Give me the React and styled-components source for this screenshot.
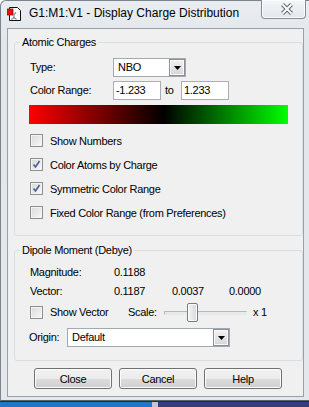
import React from 'react';
import styled, { createGlobalStyle } from 'styled-components';

const GlobalStyle = createGlobalStyle`
  html, body {
    margin: 0;
    padding: 0;
  }
  body {
    width: 309px;
    height: 407px;
    overflow: hidden;
    font-family: "Liberation Sans", Arial, sans-serif;
    font-size: 11px;
    letter-spacing: -0.3px;
    color: #000;
  }
`;

// --- Desktop + window frame ---
const Screen = styled.div`
  width: 309px;
  height: 407px;
  display: flex;
  flex-direction: column;
`;

const Window = styled.div`
  box-sizing: border-box;
  height: 401px;
  display: flex;
  flex-direction: column;
  padding: 0 0 3px 6px;
  border-left: 1px solid #7b838c;
  border-top: 1px solid #7b838c;
  border-bottom: 1px solid #59616b;
  border-top-left-radius: 6px;
  background: linear-gradient(#e9edf1, #e2e7ec 40px, #e4e8ec);
`;

const Taskbar = styled.div`
  flex: 1;
  display: flex;
  border-top: 1px solid #1c2b55;
`;

const TaskSegment = styled.div`
  width: ${(p) => p.$w}px;
  flex: ${(p) => (p.$w ? 'none' : 1)};
  background: ${(p) => p.$bg};
`;

const TitleBar = styled.div`
  height: 27px;
  display: flex;
  align-items: flex-start;
`;

const AppIcon = styled.svg`
  margin-top: 5px;
  flex: none;
`;

const TitleText = styled.span`
  margin: 5px 0 0 6px;
  font-size: 12px;
  line-height: 15px;
  letter-spacing: 0;
  white-space: nowrap;
`;

const CloseButton = styled.div`
  box-sizing: border-box;
  margin: -1px 3px 0 auto;
  width: 45px;
  height: 19px;
  display: flex;
  align-items: center;
  justify-content: center;
  padding-left: 6px;
  border: 1px solid #858d97;
  border-top: none;
  border-radius: 0 0 4px 4px;
  background: linear-gradient(#f4f6f8, #e3e7eb);
  box-shadow: inset 0 0 0 1px #fbfcfd;
`;

const Client = styled.div`
  margin-right: 5px;
  padding-bottom: 7px;
  border: 1px solid #98a0a8;
  background: #f0f0f0;
  display: flex;
  flex-direction: column;
`;

// --- Group boxes ---
const Group = styled.fieldset`
  margin: ${(p) => p.$top}px 0 0 6px;
  padding: ${(p) => p.$pt}px 0 ${(p) => p.$pb}px 5px;
  border: 1px solid #d5dfe5;
  border-radius: 3px;
  min-width: 0;
`;

const Legend = styled.legend`
  padding: 0 2px;
  line-height: 14px;
`;

const GroupBody = styled.div`
  padding-left: 10px;
  display: flex;
  flex-direction: column;
`;

const FormRow = styled.div`
  height: 19px;
  display: flex;
  align-items: center;
  margin-top: ${(p) => p.$mt || 0}px;
`;

const Label = styled.span`
  width: ${(p) => p.$w}px;
  flex: none;
  line-height: 13px;
  white-space: nowrap;
  margin-left: ${(p) => p.$ml || 0}px;
`;

const Combo = styled.div`
  box-sizing: border-box;
  width: ${(p) => p.$w}px;
  height: 19px;
  display: flex;
  border: 1px solid #a3a9b1;
  background: #fff;
`;

const ComboText = styled.span`
  flex: 1;
  padding-left: 4px;
  line-height: 16px;
`;

const DropButton = styled.div`
  box-sizing: border-box;
  width: 16px;
  height: 17px;
  display: flex;
  align-items: center;
  justify-content: center;
  border: 1px solid #8a8f96;
  background: linear-gradient(#f2f2f2, #e4e4e4 50%, #d6d6d6);
  box-shadow: inset 0 0 0 1px #fafafa;
`;

const TextBox = styled.div`
  box-sizing: border-box;
  width: 48px;
  height: 19px;
  padding-left: 2px;
  border: 1px solid #abadb3;
  background: #fff;
  line-height: 17px;
`;

const ToText = styled.span`
  width: 16px;
  margin-left: 4px;
  line-height: 13px;
`;

const GradientBar = styled.div`
  margin: 5px 0 0 -1px;
  width: 259px;
  height: 19px;
  background: linear-gradient(to right, #ff0000, #000 52%, #00ff00);
`;

const CheckList = styled.div`
  margin-top: 10px;
  display: flex;
  flex-direction: column;
  gap: 11px;
`;

const CheckRow = styled.div`
  height: 13px;
  display: flex;
  align-items: center;
`;

const Box = styled.span`
  box-sizing: border-box;
  width: 13px;
  height: 13px;
  flex: none;
  margin-right: 7px;
  display: flex;
  align-items: center;
  justify-content: center;
  border: 1px solid #8f8f8f;
  background: linear-gradient(135deg, #d9d9d9, #f8f8f8);
  box-shadow: inset 0 0 0 1px #f3f3f3;
`;

const CheckText = styled.span`
  line-height: 12px;
  white-space: nowrap;
`;

const DataGrid = styled.div`
  margin-top: 6px;
  display: grid;
  grid-template-columns: 84px 58px 57px auto;
  grid-auto-rows: 19px;
  align-items: center;
  line-height: 13px;
`;

const Slider = styled.div`
  position: relative;
  width: 83px;
  height: 19px;
  display: flex;
  align-items: center;
`;

const Track = styled.div`
  box-sizing: border-box;
  width: 100%;
  height: 4px;
  border: 1px solid #b5b8bc;
  border-bottom-color: #e9e9e9;
  border-right-color: #e9e9e9;
  background: #e7eaea;
`;

const Thumb = styled.div`
  position: absolute;
  left: 23px;
  top: 0;
  box-sizing: border-box;
  width: 11px;
  height: 19px;
  border: 1px solid #777c82;
  border-radius: 2px;
  background: linear-gradient(to right, #f6f6f6, #e3e3e3 60%, #d9d9d9);
  box-shadow: inset 0 0 0 1px #fbfbfb;
`;

const ButtonRow = styled.div`
  margin-top: 7px;
  padding-left: 26px;
  display: flex;
  gap: 7px;
`;

const Button = styled.button`
  box-sizing: border-box;
  width: 78px;
  height: 21px;
  padding: 0;
  font: inherit;
  letter-spacing: inherit;
  color: #000;
  border: 1px solid #707070;
  border-radius: 3px;
  background: linear-gradient(#f2f2f2, #ebebeb 50%, #dddddd 50%, #cfcfcf);
  box-shadow: inset 0 0 0 1px #fcfcfc;
`;

const Arrow = () => (
  <svg width="7" height="4" viewBox="0 0 7 4">
    <path d="M0 0h7L3.5 4z" fill="#000" />
  </svg>
);

const Check = () => (
  <svg width="9" height="9" viewBox="0 0 9 9">
    <path d="M1.5 4.5l2 2.5 4-6" fill="none" stroke="#4b5d95" strokeWidth="1.6" />
  </svg>
);

const Checkbox = ({ checked, children }) => (
  <CheckRow>
    <Box>{checked && <Check />}</Box>
    <CheckText>{children}</CheckText>
  </CheckRow>
);

const Dropdown = ({ width, value }) => (
  <Combo $w={width}>
    <ComboText>{value}</ComboText>
    <DropButton>
      <Arrow />
    </DropButton>
  </Combo>
);

export default function App() {
  return (
    <Screen>
      <GlobalStyle />
      <Window>
        <TitleBar>
          <AppIcon width="16" height="16" viewBox="0 0 16 16">
            <path d="M2.5 1.5h8l3 3v10h-11z" fill="#fff" stroke="#111" />
            <path d="M7 8.5v3M7 11.5l-2.5 2M7 11.5l2.5 2M7 8.5l2-2" stroke="#8a8a8a" strokeWidth="1.2" />
            <rect x="0" y="3" width="6" height="6" fill="#e8120c" stroke="#9a0b07" strokeWidth="0.8" />
          </AppIcon>
          <TitleText>G1:M1:V1 - Display Charge Distribution</TitleText>
          <CloseButton>
            <svg width="14" height="12" viewBox="0 0 14 12">
              <path d="M2.5 1.5l9 9M11.5 1.5l-9 9" stroke="#5d6672" strokeWidth="4" />
              <path d="M2.5 1.5l9 9M11.5 1.5l-9 9" stroke="#fff" strokeWidth="2" />
            </svg>
          </CloseButton>
        </TitleBar>

        <Client>
          <Group $top={6} $pt={9} $pb={16}>
            <Legend>Atomic Charges</Legend>
            <GroupBody>
              <FormRow>
                <Label $w={83}>Type:</Label>
                <Dropdown width={73} value="NBO" />
              </FormRow>
              <FormRow $mt={4}>
                <Label $w={83}>Color Range:</Label>
                <TextBox>-1.233</TextBox>
                <ToText>to</ToText>
                <TextBox>1.233</TextBox>
              </FormRow>
              <GradientBar />
              <CheckList>
                <Checkbox>Show Numbers</Checkbox>
                <Checkbox checked>Color Atoms by Charge</Checkbox>
                <Checkbox checked>Symmetric Color Range</Checkbox>
                <Checkbox>Fixed Color Range (from Preferences)</Checkbox>
              </CheckList>
            </GroupBody>
          </Group>

          <Group $top={7} $pt={0} $pb={13}>
            <Legend>Dipole Moment (Debye)</Legend>
            <GroupBody>
              <DataGrid>
                <span>Magnitude:</span>
                <span>0.1188</span>
                <span />
                <span />
                <span>Vector:</span>
                <span>0.1187</span>
                <span>0.0037</span>
                <span>0.0000</span>
              </DataGrid>
              <FormRow $mt={2}>
                <Box />
                <Label $w={78}>Show Vector</Label>
                <Label $w={36}>Scale:</Label>
                <Slider>
                  <Track />
                  <Thumb />
                </Slider>
                <Label $ml={6}>x 1</Label>
              </FormRow>
              <FormRow $mt={6}>
                <Label $w={38} $ml={-1}>Origin:</Label>
                <Dropdown width={163} value="Default" />
              </FormRow>
            </GroupBody>
          </Group>

          <ButtonRow>
            <Button>Close</Button>
            <Button>Cancel</Button>
            <Button>Help</Button>
          </ButtonRow>
        </Client>
      </Window>
      <Taskbar>
        <TaskSegment $w={152} $bg="#2474c8" />
        <TaskSegment $w={6} $bg="#c3c8ce" />
        <TaskSegment $bg="#363b7e" />
      </Taskbar>
    </Screen>
  );
}
